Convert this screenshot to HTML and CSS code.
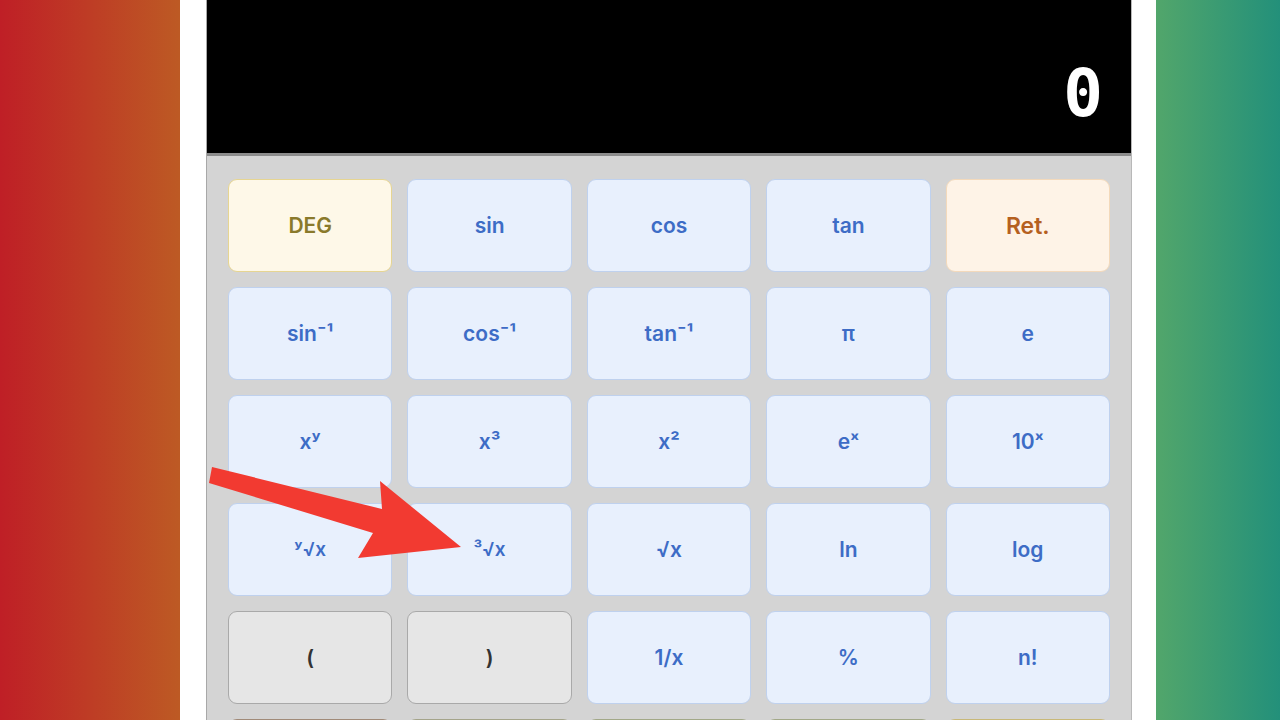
FILE: index.html
```html
<!DOCTYPE html>
<html lang="en">
<head>
<meta charset="utf-8">
<title>Scientific Calculator</title>
<link rel="stylesheet" href="styles.css">
</head>
<body>
<div class="page">
  <div class="side side-left"></div>
  <main class="center">
    <section class="calc">
      <div class="display"><span class="value">0</span></div>
      <div class="keypad">
        <button class="key key-deg">DEG</button>
        <button class="key">sin</button>
        <button class="key">cos</button>
        <button class="key">tan</button>
        <button class="key key-ret">Ret.</button>

        <button class="key">sin⁻¹</button>
        <button class="key">cos⁻¹</button>
        <button class="key">tan⁻¹</button>
        <button class="key">π</button>
        <button class="key">e</button>

        <button class="key">xʸ</button>
        <button class="key">x³</button>
        <button class="key">x²</button>
        <button class="key">eˣ</button>
        <button class="key">10ˣ</button>

        <button class="key key-small">ʸ√x</button>
        <button class="key key-small">³√x</button>
        <button class="key">√x</button>
        <button class="key">ln</button>
        <button class="key">log</button>

        <button class="key key-paren">(</button>
        <button class="key key-paren">)</button>
        <button class="key">1/x</button>
        <button class="key">%</button>
        <button class="key">n!</button>

        <button class="key key-c1" aria-label="7"></button>
        <button class="key key-c2" aria-label="8"></button>
        <button class="key key-c3" aria-label="9"></button>
        <button class="key key-c3" aria-label="divide"></button>
        <button class="key key-c5" aria-label="clear"></button>
      </div>
    </section>
  </main>
  <div class="side side-right"></div>
</div>
<svg class="arrow" width="1280" height="720" viewBox="0 0 1280 720" aria-hidden="true">
  <polygon points="212,467 382,509 380,481 461,547 358,558 373,533 209,483" fill="#f23a31"/>
</svg>
</body>
</html>
```

FILE: styles.css
```css
html, body {
  margin: 0;
  padding: 0;
  width: 1280px;
  height: 720px;
  overflow: hidden;
  background: #ffffff;
}

.page {
  display: flex;
  width: 1280px;
  height: 720px;
}

.side {
  height: 720px;
  flex: none;
}

.side-left {
  width: 180px;
  background: linear-gradient(to right, #bf1f26, #bd5a24);
}

.side-right {
  width: 124px;
  background: linear-gradient(to right, #52a66b, #23907a);
}

.center {
  flex: 1;
  background: #ffffff;
  display: flex;
  padding-left: 26px;
  padding-right: 24px;
}

.calc {
  width: 926px;
  height: 720px;
  display: flex;
  flex-direction: column;
  border-left: 1px solid #a8a8a8;
  border-right: 1px solid #b8b8b8;
  box-sizing: border-box;
}

.display {
  height: 156px;
  box-sizing: border-box;
  background: #000000;
  border-bottom: 3px solid #8c8c8c;
  display: flex;
  align-items: flex-end;
  justify-content: flex-end;
  padding-right: 28px;
  padding-bottom: 26px;
  flex: none;
}

.value {
  font-family: "DejaVu Sans Mono", monospace;
  font-weight: bold;
  font-size: 66px;
  color: #ffffff;
  line-height: 1;
}

.keypad {
  flex: 1;
  background: #d4d4d4;
  display: grid;
  grid-template-columns: repeat(5, 1fr);
  grid-auto-rows: 93px;
  column-gap: 15px;
  row-gap: 15px;
  padding: 23px 21px 0 21px;
  overflow: hidden;
}

.key {
  font-family: "Inter", "Lato", sans-serif;
  font-weight: 600;
  font-size: 21px;
  color: #3d6cc6;
  background: #e8f0fd;
  border: 1.5px solid #bfd1ee;
  border-radius: 9px;
  padding: 0;
  margin: 0;
  display: flex;
  align-items: center;
  justify-content: center;
}

.key-small {
  font-size: 19px;
}

.key-deg {
  background: #fef8e8;
  border-color: #e6d592;
  color: #8a7a2b;
}

.key-ret {
  background: #fef3e7;
  border-color: #f3d9bb;
  color: #b5601f;
  font-size: 23px;
}

.key-paren {
  background: #e6e6e6;
  border-color: #a9a9a9;
  color: #333333;
}

.key-c1 { background: #c9b6a6; border-color: #a08a78; }
.key-c2 { background: #c8c8b0; border-color: #a4a48a; }
.key-c3 { background: #c6ccaa; border-color: #a2a888; }
.key-c5 { background: #e2d8a8; border-color: #c8b878; }

.arrow {
  position: absolute;
  left: 0;
  top: 0;
  pointer-events: none;
}
```
